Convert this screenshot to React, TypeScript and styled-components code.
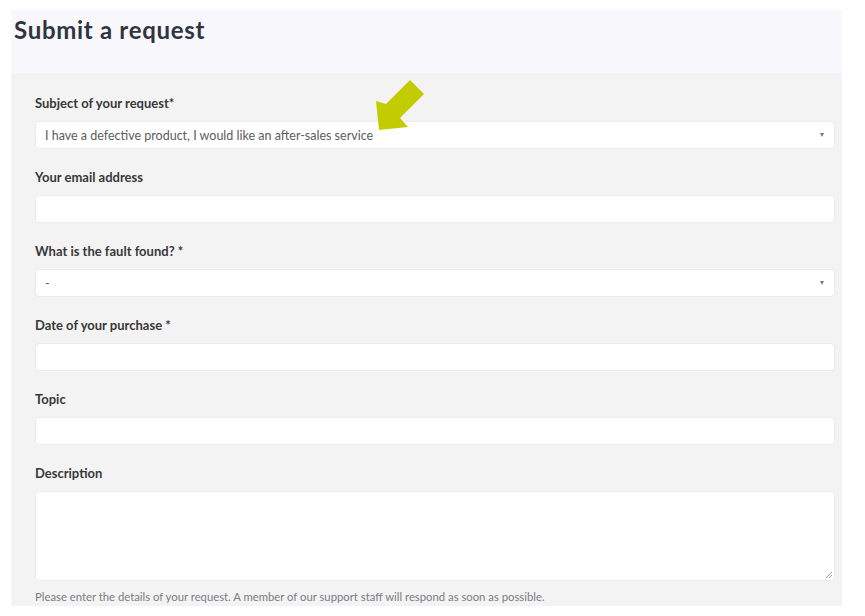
import React from "react";
import styled, { createGlobalStyle } from "styled-components";

const GlobalStyle = createGlobalStyle`
  body {
    margin: 0;
    background: #ffffff;
    font-family: Lato, "Open Sans", sans-serif;
  }
`;

const Page = styled.div`
  position: relative;
  width: 831px;
  padding: 10px 0 0 11px;
`;

const Header = styled.div`
  height: 63px;
  background: #f8f8fc;
  padding: 6px 0 0 3px;
  box-sizing: border-box;
`;

const Title = styled.h1`
  margin: 0;
  font-size: 24px;
  font-weight: 700;
  letter-spacing: 0.7px;
  color: #31343f;
  line-height: 28px;
`;

const Panel = styled.form`
  background: #f3f3f3;
  padding: 22px 7px 2px 24px;
  display: flex;
  flex-direction: column;
`;

const Field = styled.div`
  display: flex;
  flex-direction: column;
  margin-bottom: 20px;
  &:last-child {
    margin-bottom: 0;
  }
`;

const Label = styled.label`
  font-size: 13px;
  font-weight: 700;
  color: #383838;
  line-height: 17px;
  margin-bottom: 9px;
`;

const Box = styled.div<{ $tall?: boolean }>`
  position: relative;
  height: ${(p) => (p.$tall ? "90px" : "28px")};
  background: #ffffff;
  border: 1px solid #ebebeb;
  border-radius: 4px;
  box-sizing: border-box;
  display: flex;
  align-items: center;
  padding: 0 9px;
  font-size: 12.5px;
  color: #5c5c5c;
`;

const Caret = styled.span`
  position: absolute;
  right: 10px;
  top: 11px;
  width: 0;
  height: 0;
  border-left: 2.5px solid transparent;
  border-right: 2.5px solid transparent;
  border-top: 4px solid #7a7a7a;
`;

const Grip = styled.svg`
  position: absolute;
  right: 1px;
  bottom: 1px;
`;

const Help = styled.p`
  margin: 9px 0 0;
  font-size: 11.3px;
  color: #7b7b85;
  line-height: 14px;
`;

const Pointer = styled.svg`
  position: absolute;
  left: 370px;
  top: 76px;
`;

type Item = { label: string; value?: string; select?: boolean; tall?: boolean };

const FIELDS: Item[] = [
  {
    label: "Subject of your request*",
    value: "I have a defective product, I would like an after-sales service",
    select: true,
  },
  { label: "Your email address" },
  { label: "What is the fault found? *", value: "-", select: true },
  { label: "Date of your purchase *" },
  { label: "Topic" },
  { label: "Description", tall: true },
];

export default function App() {
  return (
    <>
      <GlobalStyle />
      <Page>
        <Header>
          <Title>Submit a request</Title>
        </Header>
        <Panel>
          {FIELDS.map((f) => (
            <Field key={f.label}>
              <Label>{f.label}</Label>
              <Box $tall={f.tall}>
                {f.value}
                {f.select && <Caret />}
                {f.tall && (
                  <Grip width="8" height="8" viewBox="0 0 8 8">
                    <path d="M7 1 L1 7 M7 4 L4 7" stroke="#999" strokeWidth="1" />
                  </Grip>
                )}
              </Box>
              {f.tall && (
                <Help>
                  Please enter the details of your request. A member of our support
                  staff will respond as soon as possible.
                </Help>
              )}
            </Field>
          ))}
        </Panel>
        <Pointer width="60" height="60" viewBox="370 76 60 60">
          <polygon
            points="379,130 408,127 400,118 424,94 410,80 386,104 376,101"
            fill="#c3cc00"
          />
        </Pointer>
      </Page>
    </>
  );
}
